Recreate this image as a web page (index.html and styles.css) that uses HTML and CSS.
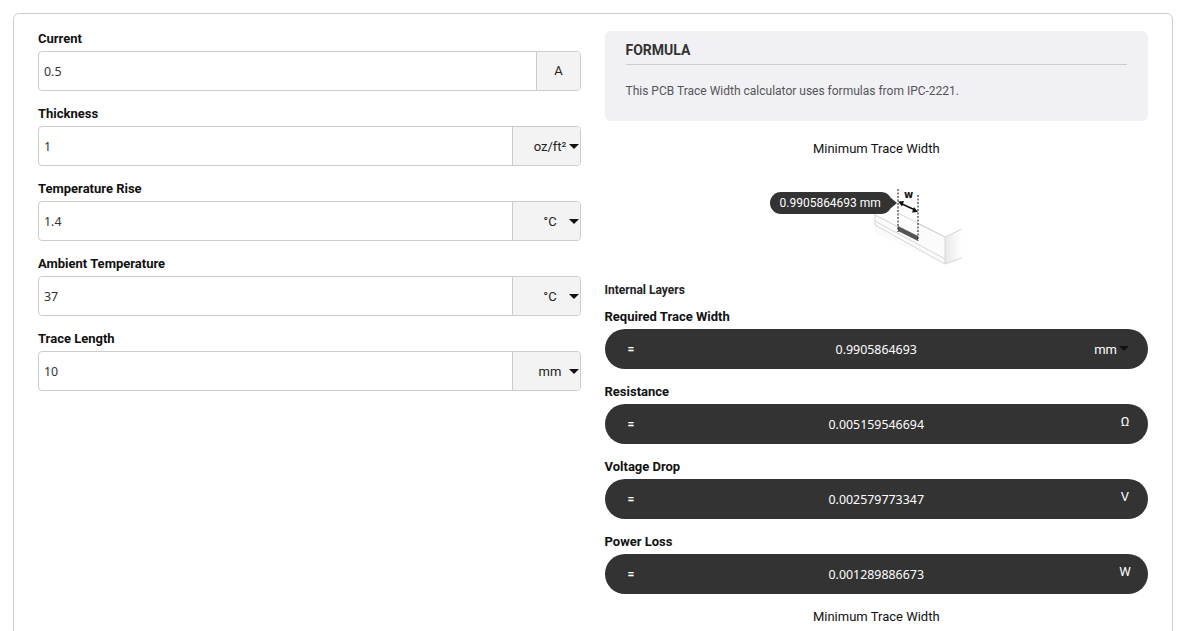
FILE: index.html
```html
<!DOCTYPE html>
<html lang="en">
<head>
<meta charset="utf-8">
<title>PCB Trace Width Calculator</title>
<link rel="stylesheet" href="styles.css">
</head>
<body>
<main class="card">
  <section class="col">
    <div class="field">
      <label class="label">Current</label>
      <div class="group"><span class="input">0.5</span><span class="unit unit-plain">A</span></div>
    </div>
    <div class="field">
      <label class="label">Thickness</label>
      <div class="group"><span class="input">1</span><span class="unit unit-select"><span class="unit-text">oz/ft²</span><i class="caret"></i></span></div>
    </div>
    <div class="field">
      <label class="label">Temperature Rise</label>
      <div class="group"><span class="input">1.4</span><span class="unit unit-select"><span class="unit-text">°C</span><i class="caret"></i></span></div>
    </div>
    <div class="field">
      <label class="label">Ambient Temperature</label>
      <div class="group"><span class="input">37</span><span class="unit unit-select"><span class="unit-text">°C</span><i class="caret"></i></span></div>
    </div>
    <div class="field">
      <label class="label">Trace Length</label>
      <div class="group"><span class="input">10</span><span class="unit unit-select"><span class="unit-text">mm</span><i class="caret"></i></span></div>
    </div>
  </section>
  <section class="col">
    <div class="formula">
      <h2 class="formula-title">FORMULA</h2>
      <p class="formula-text">This PCB Trace Width calculator uses formulas from IPC-2221.</p>
    </div>
    <h3 class="diagram-title">Minimum Trace Width</h3>
    <div class="diagram">
      <svg class="trace" width="100" height="85" viewBox="0 0 100 85">
        <defs>
          <linearGradient id="side" x1="0" x2="1"><stop offset="0" stop-color="#e8e8e8"/><stop offset="1" stop-color="#fff"/></linearGradient>
        </defs>
        <path d="M75 52 L92 44 V73 L75 79Z" fill="url(#side)"/>
        <path d="M5 30 L75 52 V79 L5 48Z" fill="#fbfbfb"/>
        <path d="M5 28 V40 L75 79 M5 36 L75 74 M75 52 V79 M75 79 L92 73 M75 52 L92 44" fill="none" stroke="#d6d6d6"/>
        <path d="M28 28 L75 52 M48 39 L75 52 M5 30 L28 42" fill="none" stroke="#d6d6d6"/>
        <path d="M28 41 L48 51 V56 L28 46Z" fill="#555"/>
        <path d="M28 4 V47 M48 10 V56" stroke="#111" stroke-dasharray="2 1.5" fill="none"/>
        <path d="M31 18.5 L45 25" stroke="#111" stroke-width="1.6" fill="none"/>
        <path d="M28 16.5 L34 16 L32 21.5Z M48 27 L42 27.5 L44 22Z" fill="#111"/>
        <text class="trace-w" x="38.5" y="13" text-anchor="middle">w</text>
      </svg>
      <span class="bubble">0.9905864693 mm</span>
    </div>
    <h4 class="sub">Internal Layers</h4>
    <div class="field">
      <label class="label">Required Trace Width</label>
      <div class="pill"><span class="eq">=</span><span class="val">0.9905864693</span><span class="pill-mm">mm<i class="caret caret-dark"></i></span></div>
    </div>
    <div class="field">
      <label class="label">Resistance</label>
      <div class="pill"><span class="eq">=</span><span class="val">0.005159546694</span><span class="pill-unit">Ω</span></div>
    </div>
    <div class="field">
      <label class="label">Voltage Drop</label>
      <div class="pill"><span class="eq">=</span><span class="val">0.002579773347</span><span class="pill-unit">V</span></div>
    </div>
    <div class="field">
      <label class="label">Power Loss</label>
      <div class="pill"><span class="eq">=</span><span class="val">0.001289886673</span><span class="pill-unit">W</span></div>
    </div>
    <h3 class="diagram-title bottom-title">Minimum Trace Width</h3>
  </section>
</main>
</body>
</html>
```
FILE: styles.css
```css
html, body { margin: 0; height: 631px; overflow: hidden; background: #fff; }
body { padding: 13px 16px 0 13px; box-sizing: border-box; font-family: Roboto, sans-serif; color: #000; }
.card { display: grid; grid-template-columns: 543px 543.5px; column-gap: 23.5px; padding: 17px 24px 0; border: 1px solid #ccc; border-radius: 6px; height: 700px; box-sizing: border-box; }
.col { display: flex; flex-direction: column; align-items: stretch; }
.field { height: 75px; flex: none; }
.label { display: block; height: 20px; font-size: 13px; font-weight: 700; line-height: 16px; color: #111; }
.group { display: flex; height: 40px; box-sizing: border-box; border: 1px solid #ccc; border-radius: 4px; overflow: hidden; }
.input { flex: 1; padding-left: 5px; font: 12.4px/40px "Noto Sans", sans-serif; color: #333; }
.unit { display: flex; align-items: center; justify-content: center; position: relative; background: #f3f3f3; border-left: 1px solid #ccc; font: 13px Roboto, sans-serif; color: #222; box-sizing: border-box; }
.unit-plain { width: 44px; padding-bottom: 2px; }
.unit-select { width: 68px; padding-left: 7px; }
.unit-text { position: relative; }
.caret { position: absolute; right: 1px; top: 17px; width: 0; height: 0; border: 5px solid transparent; border-top: 5px solid #111; border-bottom: 0; }
.formula { height: 90px; background: #f1f0f5; border-radius: 6px; padding: 11px 21px; box-sizing: border-box; }
.formula-title { margin: 0; height: 22px; font-size: 14px; font-weight: 700; line-height: 16px; color: #333; border-bottom: 1px solid #ccc; }
.formula-text { margin: 18px 0 0; font-size: 12px; line-height: 16px; color: #555; }
.diagram-title { margin: 20px 0 0; height: 16px; font-size: 13px; font-weight: 400; line-height: 16px; text-align: center; color: #111; }
.diagram { position: relative; height: 125px; }
.trace { position: absolute; left: 265px; top: 28px; }
.trace-w { font: 700 10px "DejaVu Sans", sans-serif; fill: #111; }
.bubble { position: absolute; left: 165px; top: 35px; height: 22px; padding: 0 11px 0 10px; background: #333; color: #fff; border-radius: 11px; font-size: 12px; line-height: 22px; }
.bubble::after { content: ""; position: absolute; right: -5px; top: 6px; border-left: 6px solid #333; border-top: 5px solid transparent; border-bottom: 5px solid transparent; }
.sub { margin: 0; height: 27px; font-size: 12px; font-weight: 700; line-height: 16px; color: #222; }
.pill { display: flex; align-items: center; height: 40px; background: #333; border-radius: 20px; color: #fff; font: 12.4px "Noto Sans", sans-serif; position: relative; }
.eq { position: absolute; left: 23px; top: 11px; font: 700 12px/18px Roboto, sans-serif; }
.val { flex: 1; text-align: center; }
.pill-unit { position: absolute; right: 8px; top: 9px; width: 30px; text-align: center; font: 13px/18px Roboto, sans-serif; }
.pill-mm { position: absolute; right: 19px; top: 12px; padding-right: 12px; font: 13px/18px Roboto, sans-serif; }
.caret-dark { right: 0; top: 5px; border-top-color: #111; }
.bottom-title { margin-top: 0; }
```
